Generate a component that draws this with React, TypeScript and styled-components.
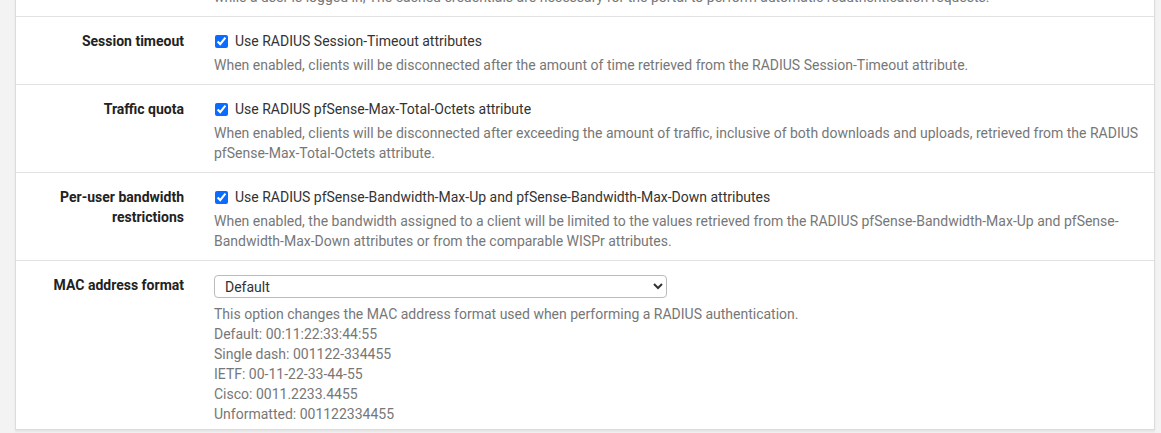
import React from "react";
import styled, { createGlobalStyle } from "styled-components";

const GlobalStyle = createGlobalStyle`
  html, body { margin: 0; padding: 0; background: #f3f3f3; }
  body { font-family: Roboto, "Noto Sans", "Liberation Sans", sans-serif; font-size: 14px; line-height: 20px; color: #333; }
`;

const Page = styled.div`
  height: 433px;
  overflow: hidden;
  padding: 0 6px 0 15px;
`;

const Panel = styled.div`
  margin-top: -13px;
  background: #fff;
  border: 1px solid #dcdcdc;
  border-top: none;
  box-shadow: 0 2px 2px rgba(0, 0, 0, 0.06);
`;

const Row = styled.div<{ $first?: boolean }>`
  display: grid;
  grid-template-columns: 183px 1fr;
  border-top: ${(p) => (p.$first ? "none" : "1px solid #e2e2e2")};
`;

const Label = styled.div`
  padding: 14px 15px 0 15px;
  text-align: right;
  font-weight: 700;
  color: #222;
`;

const Content = styled.div<{ $top?: number; $bottom?: number }>`
  padding: ${(p) => p.$top ?? 14}px 15px ${(p) => p.$bottom ?? 9}px 15px;
`;

const CheckLine = styled.label`
  display: flex;
  align-items: center;
  gap: 7px;
  color: #333;
  height: 20px;
  padding-left: 1px;
`;

const Check = styled.input`
  margin: 0;
  width: 13px;
  height: 13px;
  accent-color: #0a6cff;
`;

const Help = styled.div<{ $gap?: number }>`
  margin-top: ${(p) => p.$gap ?? 4}px;
  color: #777;
`;

const Select = styled.select`
  display: block;
  width: 453px;
  height: 23px;
  padding: 0 6px;
  font-family: inherit;
  font-size: 14px;
  color: #333;
  background: #fff;
  border: 1px solid #bbb;
  border-radius: 4px;
`;

const rows = [
  {
    label: "Session timeout",
    check: "Use RADIUS Session-Timeout attributes",
    help: "When enabled, clients will be disconnected after the amount of time retrieved from the RADIUS Session-Timeout attribute.",
  },
  {
    label: "Traffic quota",
    check: "Use RADIUS pfSense-Max-Total-Octets attribute",
    help: "When enabled, clients will be disconnected after exceeding the amount of traffic, inclusive of both downloads and uploads, retrieved from the RADIUS pfSense-Max-Total-Octets attribute.",
  },
  {
    label: "Per-user bandwidth restrictions",
    check: "Use RADIUS pfSense-Bandwidth-Max-Up and pfSense-Bandwidth-Max-Down attributes",
    help: "When enabled, the bandwidth assigned to a client will be limited to the values retrieved from the RADIUS pfSense-Bandwidth-Max-Up and pfSense-Bandwidth-Max-Down attributes or from the comparable WISPr attributes.",
  },
];

const macLines = [
  "This option changes the MAC address format used when performing a RADIUS authentication.",
  "Default: 00:11:22:33:44:55",
  "Single dash: 001122-334455",
  "IETF: 00-11-22-33-44-55",
  "Cisco: 0011.2233.4455",
  "Unformatted: 001122334455",
];

export default function App() {
  return (
    <>
      <GlobalStyle />
      <Page>
        <Panel>
          <Row $first>
            <Label />
            <Content $top={0}>
              <Help $gap={0}>
                while a user is logged in, The cached credentials are necessary for the portal to perform automatic reauthentication requests.
              </Help>
            </Content>
          </Row>
          {rows.map((r) => (
            <Row key={r.label}>
              <Label>{r.label}</Label>
              <Content>
                <CheckLine>
                  <Check type="checkbox" defaultChecked />
                  {r.check}
                </CheckLine>
                <Help>{r.help}</Help>
              </Content>
            </Row>
          ))}
          <Row>
            <Label>MAC address format</Label>
            <Content $bottom={5}>
              <Select defaultValue="default">
                <option value="default">Default</option>
                <option value="singledash">Single dash</option>
                <option value="ietf">IETF</option>
                <option value="cisco">Cisco</option>
                <option value="unformatted">Unformatted</option>
              </Select>
              <Help $gap={6}>
                {macLines.map((l) => (
                  <div key={l}>{l}</div>
                ))}
              </Help>
            </Content>
          </Row>
        </Panel>
      </Page>
    </>
  );
}
